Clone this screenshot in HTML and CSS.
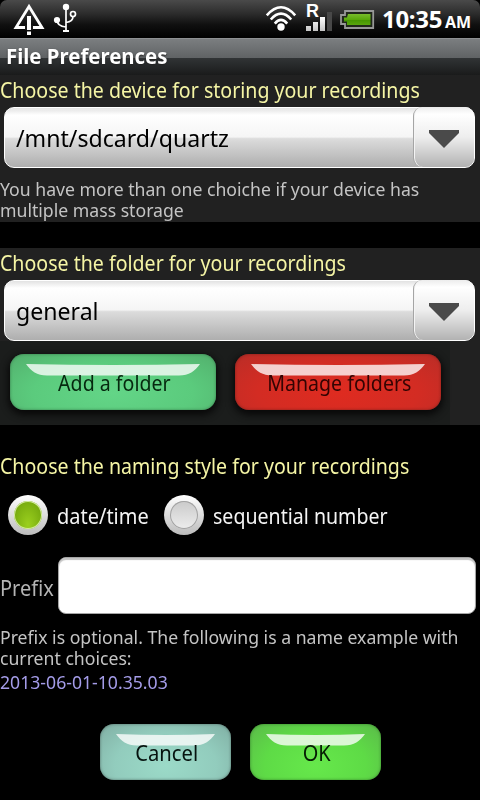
FILE: index.html
```
<!DOCTYPE html>
<html lang="en">
<head>
<meta charset="utf-8">
<title>File Preferences</title>
<link rel="stylesheet" href="styles.css">
</head>
<body>
<header class="status">
  <svg class="status-icons" width="90" height="38" viewBox="0 0 90 38">
    <path d="M29 6.500 16 27.500H42Z" fill="none" stroke="#fff" stroke-width="2.800"/>
    <path d="M25 25h8v5h-8z" fill="#1b1b1b"/>
    <path d="M27 16h4v14h-4zM27 31.500h4v3.500h-4z" fill="#fff"/>
    <g fill="none" stroke="#fff" stroke-width="1.700">
      <path d="M66 7v24M57 20c0 4 3 6.500 9 7M66 22.500c4.500-.5 7-2.500 7-6"/>
      <circle cx="73" cy="14" r="2.500"/>
    </g>
    <circle cx="66" cy="7" r="3.200" fill="#fff"/>
    <circle cx="57" cy="20" r="3.100" fill="#fff"/>
    <path d="M63 30h6v2h-6z" fill="#fff"/>
  </svg>
  <svg class="signal-icons" width="120" height="38" viewBox="260 0 120 38">
    <defs>
      <linearGradient id="bars" x1="0" y1="0" x2="0" y2="1"><stop offset="0" stop-color="#fff"/><stop offset="1" stop-color="#c4c4c4"/></linearGradient>
      <linearGradient id="charge" x1="0" y1="0" x2="0" y2="1"><stop offset="0" stop-color="#79bd2c"/><stop offset=".5" stop-color="#5aa90c"/><stop offset=".55" stop-color="#459500"/><stop offset="1" stop-color="#58a50c"/></linearGradient>
    </defs>
    <g fill="none" stroke="#fff" stroke-width="2.600">
      <path d="M266.800 15.300Q281 -.8 295.200 15.300"/>
      <path d="M270.800 19.500Q281 7.800 291.200 19.500"/>
      <path d="M274.800 23.600Q281 16.200 287.200 23.600"/>
    </g>
    <circle cx="281" cy="27" r="3.700" fill="#fff"/>
    <path d="M306 26h5v5h-5zM313 22h5v9h-5zM320 17h5v14h-5z" fill="url(#bars)"/>
    <path d="M327 12h5v19h-5z" fill="#484848"/>
    <path d="M345 11h28.200v17H345v-4h-4v-9h4z" fill="#20271a" stroke="#979797" stroke-width="1.800"/>
    <path d="M348 14h22.500v11H347v-3.500h-3v-4h3z" fill="url(#charge)"/>
  </svg>
  <span class="roaming">R</span>
  <span class="clock">10:35</span>
  <span class="meridiem">AM</span>
</header>

<h1 class="title"><span class="fit fit-97">File Preferences</span></h1>

<main>
  <section class="panel device">
    <h2 class="heading"><span class="fit fit-93">Choose the device for storing your recordings</span></h2>
    <div class="spinner">
      <span class="fit fit-96">/mnt/sdcard/quartz</span>
      <span class="spinner-button"><svg width="30" height="18" viewBox="0 0 30 18"><path d="M0 0h30v3L15 18 0 3z" fill="#4a4a4a"/></svg></span>
    </div>
    <p class="note"><span class="fit fit-98">You have more than one choiche if your device has<br>multiple mass storage</span></p>
  </section>

  <section class="panel folder">
    <h2 class="heading"><span class="fit fit-93">Choose the folder for your recordings</span></h2>
    <div class="spinner">
      <span class="fit fit-96">general</span>
      <span class="spinner-button"><svg width="30" height="18" viewBox="0 0 30 18"><path d="M0 0h30v3L15 18 0 3z" fill="#4a4a4a"/></svg></span>
    </div>
    <div class="folder-buttons">
      <button class="gloss mint wide"><svg class="shine" width="174" height="13" viewBox="0 0 174 13"><path d="M0 0Q87 2 174 0C169 7 163 11.500 153 11.500H21C11 11.500 5 7 0 0z"/></svg><span class="fit fit-93">Add a folder</span></button>
      <button class="gloss red wide"><svg class="shine" width="174" height="13" viewBox="0 0 174 13"><path d="M0 0Q87 2 174 0C169 7 163 11.500 153 11.500H21C11 11.500 5 7 0 0z"/></svg><span class="fit fit-93">Manage folders</span></button>
    </div>
  </section>

  <section class="naming">
    <h2 class="heading"><span class="fit fit-93">Choose the naming style for your recordings</span></h2>
    <div class="choices">
      <label class="choice first"><span class="radio on"></span><span class="fit fit-95">date/time</span></label>
      <label class="choice"><span class="radio"></span><span class="fit fit-93">sequential number</span></label>
    </div>
    <div class="prefix">
      <span class="prefix-label"><span class="fit fit-95">Prefix</span></span>
      <input class="prefix-input" type="text" aria-label="Prefix">
    </div>
    <p class="note example"><span class="fit fit-98">Prefix is optional. The following is a name example with<br>current choices:</span></p>
    <p class="sample"><span class="fit fit-98">2013-06-01-10.35.03</span></p>
  </section>

  <div class="actions">
    <button class="gloss aqua"><svg class="shine" width="99" height="13" viewBox="0 0 99 13"><path d="M0 0Q50 2 99 0C94 7 88 11.500 78 11.500H21C11 11.500 5 7 0 0z"/></svg><span class="fit fit-96">Cancel</span></button>
    <button class="gloss lime"><svg class="shine" width="99" height="13" viewBox="0 0 99 13"><path d="M0 0Q50 2 99 0C94 7 88 11.500 78 11.500H21C11 11.500 5 7 0 0z"/></svg><span class="fit fit-95">OK</span></button>
  </div>
</main>
</body>
</html>
```
FILE: styles.css
```
* { box-sizing: border-box; }

body {
  margin: 0;
  width: 480px;
  height: 800px;
  overflow: hidden;
  background: #000;
  color: #f4f4f4;
  font: 21px/24px "Noto Sans", sans-serif;
}

h1, h2, p { margin: 0; font-weight: 400; }

/* Slightly condensed text */
.fit { display: inline-block; transform-origin: 0 50%; white-space: nowrap; }
.fit-93 { transform: scaleX(.932); }
.fit-95 { transform: scaleX(.951); }
.fit-96 { transform: scaleX(.963); }
.fit-97 { transform: scaleX(.971); }
.fit-98 { transform: scaleX(.98); }

.status {
  display: flex;
  position: relative;
  height: 38px;
  background: linear-gradient(#4a4a4a, #2d2d2d 35%, #101010 65%, #000);
  border-radius: 7px 7px 0 0;
  color: #fff;
  font-weight: 700;
}
.signal-icons { margin-left: 170px; }
.roaming {
  position: absolute;
  left: 306px;
  top: 1px;
  font: 700 18px/20px "Liberation Sans", sans-serif;
}
.clock {
  margin-left: 2px;
  width: 62px;
  font-size: 24px;
  line-height: 38px;
  letter-spacing: -.3px;
}
.meridiem { margin-left: 1px; font-size: 16px; line-height: 44px; }

.title {
  height: 37px;
  padding-left: 6px;
  border-top: 1px solid #8d9092;
  background: linear-gradient(#7b7e80, #606365 52%, #303335 54%, #1a1b1b);
  color: #fff;
  font-size: 21px;
  font-weight: 700;
  line-height: 34px;
  text-shadow: 0 1px 2px #222;
}

.panel { background: #212121; }
.device { height: 147px; padding-top: 3px; }
.folder { height: 177px; margin-top: 26px; padding-top: 3px; }

.heading { color: #f5f5a5; font-size: 21px; line-height: 24px; }

.spinner {
  display: flex;
  justify-content: space-between;
  width: 471px;
  height: 61px;
  margin: 5px 0 0 4px;
  padding-left: 11px;
  border: 1px solid #fff;
  border-radius: 10px;
  background: linear-gradient(#e2e2e2, #fff 12%, #f5f5f5 49%, #dcdcdc 52%, #aeaeae);
  color: #000;
  font-size: 24px;
  line-height: 60px;
}
.spinner-button {
  display: flex;
  width: 61px;
  height: 60px;
  margin: -1px 0 0;
  padding: 23px 0 0 15px;
  border-left: 1px solid #a5a5a5;
  border-radius: 9px;
  background: linear-gradient(#ececec, #fff 12%, #eee 50%, #b2b2b2);
  box-shadow: inset 1px 0 #f4f4f4;
}

.note { color: #c4c4c4; font-size: 18px; line-height: 21px; }
.note .fit { vertical-align: top; }
.device .note { margin-top: 11px; }

.folder-buttons {
  display: flex;
  gap: 19px;
  width: 450px;
  height: 84px;
  padding: 13px 0 0 10px;
  background: #1b1d1c;
}

.gloss {
  position: relative;
  width: 131px;
  height: 56px;
  padding: 2px 0 0 2px;
  border: 0;
  border-radius: 14px;
  color: #000;
  font: 21px/54px "Noto Sans", sans-serif;
  text-align: center;
}
.gloss.wide { width: 206px; }
.gloss .fit { position: relative; transform-origin: 50% 50%; }
.shine { position: absolute; left: 16px; top: 10px; fill: #fff; opacity: .78; filter: blur(.6px); }

.mint {
  background: radial-gradient(ellipse at 50% 70%, #63d587, #5bcb7d 55%, #52ae6c);
  box-shadow: inset 0 0 3px #387a4b, 0 3px 7px 2px #090909;
  color: #06280f;
}
.red {
  background: radial-gradient(ellipse at 50% 70%, #df2b20, #d32c23 55%, #b92d27);
  box-shadow: inset 0 0 3px #7c211c, 0 3px 7px 2px #090909;
  color: #330403;
}
.aqua {
  background: radial-gradient(ellipse at 50% 75%, #9bdac8, #92ccbd 55%, #80aea3);
  box-shadow: inset 0 0 3px #536e67;
  color: #06130f;
}
.lime {
  background: radial-gradient(ellipse at 50% 75%, #66e84b, #5edb46 55%, #5bb94a);
  box-shadow: inset 0 0 3px #387f2c;
  color: #061d04;
}

.naming { padding-top: 29px; }
.choices { display: flex; padding: 17px 0 0 8px; }
.choice { display: flex; gap: 9px; line-height: 43px; height: 41px; }
.choice.first { width: 156px; }
.radio {
  flex: none;
  width: 40px;
  height: 40px;
  border: 6px solid transparent;
  border-radius: 50%;
  background: linear-gradient(#cacaca, #ededed) padding-box, linear-gradient(#fff, #bcbcbc) border-box;
  box-shadow: inset 0 0 0 1px #a2a2a2;
}
.radio.on {
  background: radial-gradient(ellipse at 50% 85%, #9bd01e, #79ad10 70%, #8cba37) padding-box, linear-gradient(#fff, #bcbcbc) border-box;
  box-shadow: inset 0 0 0 1px #d3eba0;
}

.prefix { display: flex; margin-top: 21px; }
.prefix-label { width: 58px; height: 57px; color: #b4b4b4; line-height: 62px; }
.prefix-input {
  width: 418px;
  height: 57px;
  border: 1px solid #a5a5a5;
  border-radius: 8px;
  background: #fff;
  box-shadow: inset 0 2px 1px #c4c4c4;
}

.example { margin-top: 13px; }
.sample { margin-top: 3px; color: #a49ce8; font-size: 18px; line-height: 21px; }

.actions { display: flex; gap: 19px; margin-top: 31px; padding-left: 100px; }
```
